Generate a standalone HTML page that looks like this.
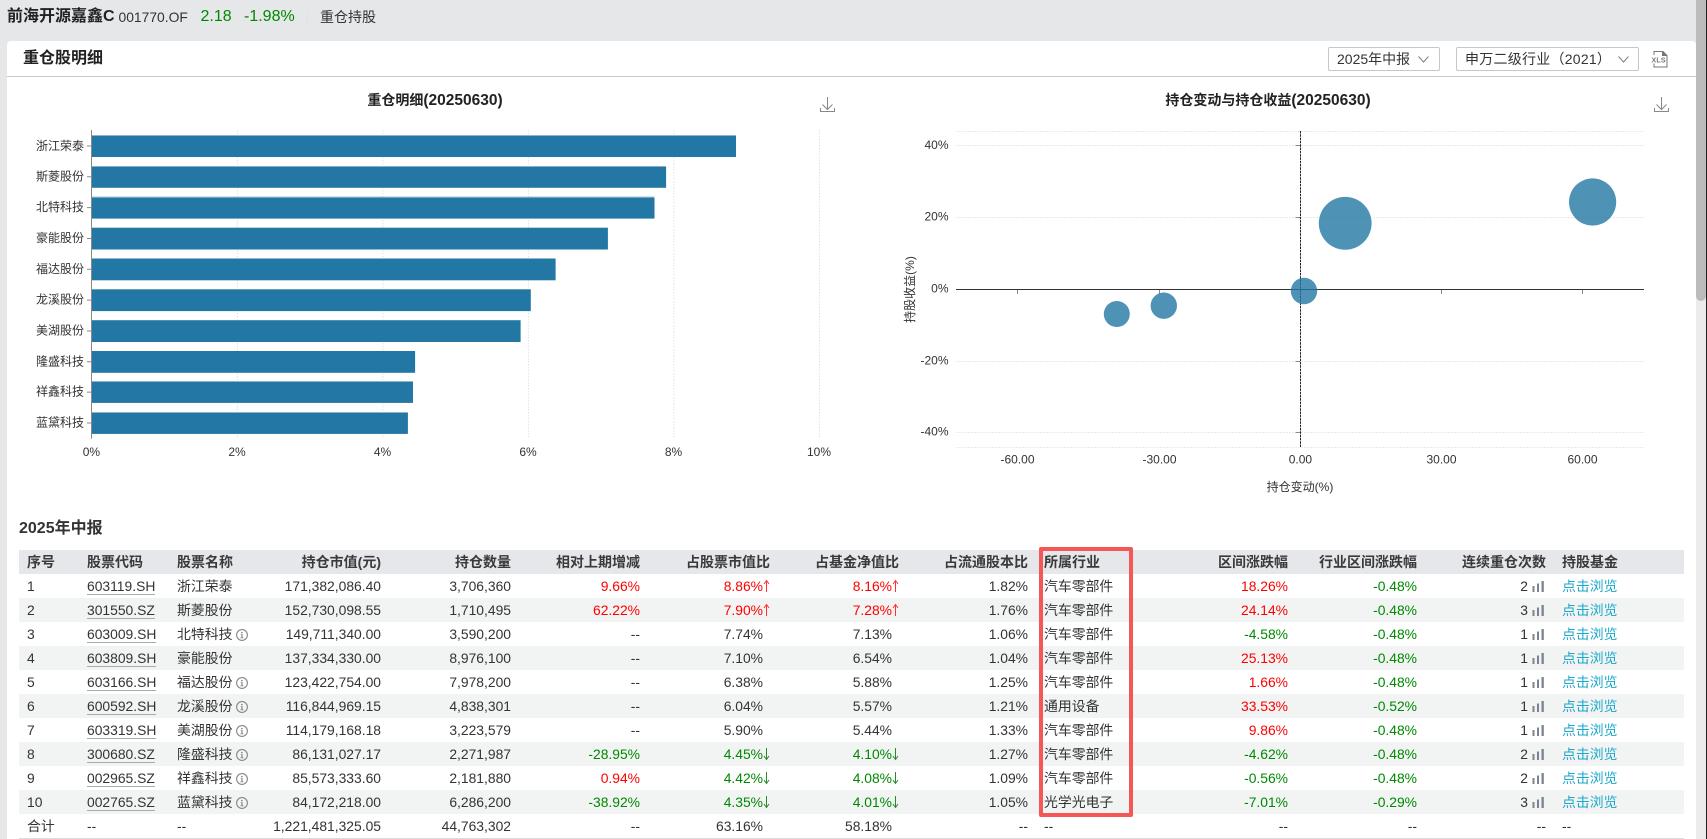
<!DOCTYPE html>
<html lang="zh-CN">
<head>
<meta charset="utf-8">
<title>重仓持股</title>
<style>
html,body{margin:0;padding:0;width:1707px;height:839px;overflow:hidden;background:#e5e7e9;font-family:"Liberation Sans","Noto Sans CJK SC",sans-serif;color:#333}
.abs{position:absolute;white-space:nowrap}
#card{position:absolute;left:7px;top:41px;width:1689px;height:798px;background:#fff;border-radius:4px 4px 0 0}
#hline{position:absolute;left:7px;top:75.5px;width:1689px;height:1px;background:#c8c8c8}
#track{position:absolute;left:1696px;top:0;width:11px;height:839px;background:#ececec}
#thumb{position:absolute;left:1696px;top:0;width:10px;height:301px;background:#bcbcbc;border-radius:0 0 5px 5px}
#sbline{position:absolute;left:1706px;top:0;width:1px;height:839px;background:#222}
.sel{position:absolute;top:47px;height:22px;border:1px solid #c4c7cc;border-radius:2px;background:#fff;font-size:14px;line-height:22px;color:#333;box-sizing:content-box}
.sel span{position:absolute;left:8px;top:0;white-space:nowrap}
.sel svg{position:absolute;top:7px}
svg.full{position:absolute;left:0;top:0}
svg.full text{font-family:"Liberation Sans","Noto Sans CJK SC",sans-serif}
table{position:absolute;left:19px;top:550px;width:1665px;border-collapse:collapse;table-layout:fixed;font-size:13.87px;line-height:24px}
th,td{height:24px;padding:0;white-space:nowrap;overflow:visible;font-weight:normal;text-align:right;padding-right:8px}
th{font-size:14px;font-weight:bold;background:#e5e7ea;color:#3a3a3a}
.l{text-align:left;padding-right:0;padding-left:8px}
tbody tr:nth-child(even) td{background:#f2f4f4}
tbody tr.tot td{background:#fff;border-bottom:1px solid #ddd;height:24px}
.r{color:#f00}.g{color:#080}
.pa{padding-right:15px}
.code{display:inline-block;line-height:24px;height:20px;border-bottom:1px solid #aaa;vertical-align:top}
.link{color:#1ba8c9}
.ar{display:inline-block;width:7px;height:14px;vertical-align:-2px}
.ic{display:inline-block;width:12px;height:12px;vertical-align:-2px;margin-left:4px}
.bars{display:inline-block;width:13px;height:11px;vertical-align:-1px;margin-left:4px;margin-right:1px}
#box{position:absolute;left:1039px;top:547px;width:94px;height:270px;box-sizing:border-box;border:4px solid #f55757;border-radius:2px}
</style>
</head>
<body>
<div id="card"></div>
<div id="hline"></div>
<div id="track"></div><div id="thumb"></div><div id="sbline"></div>

<div class="abs" style="left:7px;top:5px;font-size:16px;font-weight:bold;line-height:24px;color:#222">前海开源嘉鑫C</div>
<div class="abs" style="left:118.5px;top:5px;font-size:13.87px;line-height:24px;color:#333">001770.OF</div>
<div class="abs" style="left:200.5px;top:5px;font-size:16px;line-height:24px;color:#080">2.18</div>
<div class="abs" style="left:244px;top:5px;font-size:16px;line-height:24px;color:#080">-1.98%</div>
<div class="abs" style="left:307px;top:10px;width:1px;height:15px;background:#e0e2e4"></div>
<div class="abs" style="left:320px;top:5px;font-size:14px;line-height:24px;color:#333">重仓持股</div>
<div class="abs" style="left:23px;top:47px;font-size:16px;font-weight:bold;line-height:24px;color:#222">重仓股明细</div>

<div class="sel" style="left:1328px;width:110px"><span>2025年中报</span><svg style="left:88px" width="13" height="9" viewBox="0 0 13 9"><path d="M1.5 1.5L6.5 7L11.5 1.5" fill="none" stroke="#888" stroke-width="1.1"/></svg></div>
<div class="sel" style="left:1456px;width:181px"><span style="letter-spacing:.25px">申万二级行业（2021）</span><svg style="left:160px" width="13" height="9" viewBox="0 0 13 9"><path d="M1.5 1.5L6.5 7L11.5 1.5" fill="none" stroke="#888" stroke-width="1.1"/></svg></div>

<svg class="full" width="1707" height="839" viewBox="0 0 1707 839">
  <!-- XLS icon -->
  <path d="M1654 55V51.5H1663L1667 55.5V67H1654V63.5" fill="none" stroke="#777" stroke-width="1"/>
  <path d="M1662.5 51.5V55.5H1667" fill="#777" stroke="#777" stroke-width="1"/>
  <text x="1658.5" y="62.5" font-size="7" font-weight="bold" fill="#777" text-anchor="middle" textLength="14">XLS</text>

  <!-- download icons -->
  <g fill="none" stroke="#888" stroke-width="1">
    <path d="M827.5 97V109M822.5 104.5L827.5 109.5L832.5 104.5M820.5 108V111.5H834.5V108"/>
    <path d="M1661.5 97V109M1656.5 104.5L1661.5 109.5L1666.5 104.5M1654.5 108V111.5H1668.5V108"/>
  </g>

  <!-- chart titles -->
  <text x="435" y="105" font-size="14" font-weight="bold" text-anchor="middle" fill="#222">重仓明细<tspan font-size="15.5">(20250630)</tspan></text>
  <text x="1268" y="105" font-size="14" font-weight="bold" text-anchor="middle" fill="#222">持仓变动与持仓收益<tspan font-size="15.5">(20250630)</tspan></text>

  <!-- bar chart grid -->
  <g stroke="#e2e2e2" stroke-width="1" stroke-dasharray="1.5 1.5">
    <path d="M237.4 130V438.7M382.9 130V438.7M528.4 130V438.7M673.9 130V438.7M819.4 130V438.7"/>
  </g>
  <!-- bars -->
  <g fill="#2277a4" stroke="#8fb8cf" stroke-width="0">
    <rect x="91.4" y="135.2" width="644.6" height="21.8"/>
    <rect x="91.4" y="166" width="574.7" height="21.8"/>
    <rect x="91.4" y="196.8" width="563.1" height="21.8"/>
    <rect x="91.4" y="227.7" width="516.5" height="21.8"/>
    <rect x="91.4" y="258.5" width="464.2" height="21.8"/>
    <rect x="91.4" y="289.3" width="439.4" height="21.8"/>
    <rect x="91.4" y="320.2" width="429.2" height="21.8"/>
    <rect x="91.4" y="351" width="323.7" height="21.8"/>
    <rect x="91.4" y="381.3" width="321.6" height="21.6"/>
    <rect x="91.4" y="412.3" width="316.5" height="21.6"/>
  </g>
  <g fill="#8fb8cf" opacity=".9">
    <rect x="91.4" y="135" width="644.6" height="1"/>
    <rect x="91.4" y="166" width="574.7" height="1"/>
    <rect x="91.4" y="196.8" width="563.1" height="1"/>
    <rect x="91.4" y="381" width="321.6" height="1"/>
    <rect x="91.4" y="412" width="316.5" height="1"/>
  </g>
  <path d="M91.5 130V438.7" stroke="#888" stroke-width="1" fill="none"/>
  <path d="M87 146H91M87 176.8H91M87 207.6H91M87 238.5H91M87 269.3H91M87 300.1H91M87 331H91M87 361.8H91M87 392.1H91M87 423H91" stroke="#888" stroke-width="1" fill="none"/>
  <g font-size="12" fill="#333" text-anchor="end">
    <text x="84" y="150">浙江荣泰</text>
    <text x="84" y="180.3">斯菱股份</text>
    <text x="84" y="211.1">北特科技</text>
    <text x="84" y="242">豪能股份</text>
    <text x="84" y="272.8">福达股份</text>
    <text x="84" y="303.6">龙溪股份</text>
    <text x="84" y="334.5">美湖股份</text>
    <text x="84" y="365.3">隆盛科技</text>
    <text x="84" y="395.6">祥鑫科技</text>
    <text x="84" y="426.5">蓝黛科技</text>
  </g>
  <g font-size="12" fill="#333" text-anchor="middle">
    <text x="91.4" y="456">0%</text>
    <text x="237" y="456">2%</text>
    <text x="382.5" y="456">4%</text>
    <text x="528" y="456">6%</text>
    <text x="673.5" y="456">8%</text>
    <text x="819" y="456">10%</text>
  </g>

  <!-- bubble chart -->
  <g stroke="#e8eaee" stroke-width="1" stroke-dasharray="2 1" fill="none">
    <path d="M956 131.5H1644M956 145.5H1644M956 217.5H1644M956 361.5H1644M956 432.5H1644M956 447.5H1644"/>
  </g>
  <path d="M1295.5 145.5H1300M1295.5 217.5H1300M1295.5 361.5H1300M1295.5 432.5H1300" stroke="#888" fill="none"/>
  <path d="M1017.5 289.5V294M1159.5 289.5V294M1441.5 289.5V294M1582.5 289.5V294" stroke="#888" fill="none"/>
  <path d="M1300.5 131V447" stroke="#222" stroke-width="1" stroke-dasharray="2.5 .8" fill="none"/>
  <path d="M956 289.5H1644" stroke="#333" stroke-width="1" fill="none"/>
  <g fill="#2277a4" fill-opacity=".8">
    <circle cx="1592.6" cy="202" r="23.6"/>
    <circle cx="1345.2" cy="223.3" r="26.4"/>
    <circle cx="1304" cy="291" r="13.2"/>
    <circle cx="1163.8" cy="305.7" r="13.2"/>
    <circle cx="1116.8" cy="314" r="13"/>
  </g>
  <g font-size="12" fill="#333" text-anchor="end">
    <text x="948.5" y="149">40%</text>
    <text x="948.5" y="220.5">20%</text>
    <text x="948.5" y="292.5">0%</text>
    <text x="948.5" y="364.5">-20%</text>
    <text x="948.5" y="435.5">-40%</text>
  </g>
  <g font-size="12" fill="#333" text-anchor="middle">
    <text x="1017.5" y="463.5">-60.00</text>
    <text x="1159.5" y="463.5">-30.00</text>
    <text x="1300.4" y="463.5">0.00</text>
    <text x="1441.5" y="463.5">30.00</text>
    <text x="1582.5" y="463.5">60.00</text>
    <text x="1300" y="491">持仓变动(%)</text>
    <text x="0" y="0" transform="translate(914,289.5) rotate(-90)">持股收益(%)</text>
  </g>
</svg>

<div class="abs" style="left:19px;top:517px;font-size:16px;font-weight:bold;line-height:24px;color:#333">2025年中报</div>

<table>
<colgroup>
<col style="width:60px"><col style="width:90px"><col style="width:92px"><col style="width:128px"><col style="width:130px"><col style="width:129px"><col style="width:130px"><col style="width:129px"><col style="width:129px"><col style="width:119px"><col style="width:141px"><col style="width:129px"><col style="width:129px"><col style="width:130px">
</colgroup>
<thead>
<tr><th class="l">序号</th><th class="l">股票代码</th><th class="l">股票名称</th><th>持仓市值(元)</th><th>持仓数量</th><th>相对上期增减</th><th>占股票市值比</th><th>占基金净值比</th><th>占流通股本比</th><th class="l">所属行业</th><th>区间涨跌幅</th><th>行业区间涨跌幅</th><th>连续重仓次数</th><th class="l">持股基金</th></tr>
</thead>
<tbody>
<tr><td class="l">1</td><td class="l"><span class="code">603119.SH</span></td><td class="l">浙江荣泰</td><td>171,382,086.40</td><td>3,706,360</td><td class="r">9.66%</td><td class="r">8.86%<svg class="ar" viewBox="0 0 7 14"><path d="M3.5 13V2M1 5L3.5 1.5L6 5" fill="none" stroke="#f33" stroke-width="1"/></svg></td><td class="r">8.16%<svg class="ar" viewBox="0 0 7 14"><path d="M3.5 13V2M1 5L3.5 1.5L6 5" fill="none" stroke="#f33" stroke-width="1"/></svg></td><td>1.82%</td><td class="l">汽车零部件</td><td class="r">18.26%</td><td class="g">-0.48%</td><td>2<svg class="bars" viewBox="0 0 13 11"><path d="M0.5 5h2v6h-2zM5 2.5h2v8.500h-2zM9.500 0h2.300v11h-2.300z" fill="#7b8390"/></svg></td><td class="l link">点击浏览</td></tr>
<tr><td class="l">2</td><td class="l"><span class="code">301550.SZ</span></td><td class="l">斯菱股份</td><td>152,730,098.55</td><td>1,710,495</td><td class="r">62.22%</td><td class="r">7.90%<svg class="ar" viewBox="0 0 7 14"><path d="M3.5 13V2M1 5L3.5 1.5L6 5" fill="none" stroke="#f33" stroke-width="1"/></svg></td><td class="r">7.28%<svg class="ar" viewBox="0 0 7 14"><path d="M3.5 13V2M1 5L3.5 1.5L6 5" fill="none" stroke="#f33" stroke-width="1"/></svg></td><td>1.76%</td><td class="l">汽车零部件</td><td class="r">24.14%</td><td class="g">-0.48%</td><td>3<svg class="bars" viewBox="0 0 13 11"><path d="M0.5 5h2v6h-2zM5 2.5h2v8.500h-2zM9.500 0h2.300v11h-2.300z" fill="#7b8390"/></svg></td><td class="l link">点击浏览</td></tr>
<tr><td class="l">3</td><td class="l"><span class="code">603009.SH</span></td><td class="l">北特科技<svg class="ic" viewBox="0 0 12 12"><circle cx="6" cy="6" r="5.400" fill="none" stroke="#888" stroke-width="1.1"/><path d="M5 3h1.600v1.300H5zM4.700 5.200h1.900v3.200h.8v.8H4.500v-.8h.9V6H4.700z" fill="#888"/></svg></td><td>149,711,340.00</td><td>3,590,200</td><td>--</td><td class="pa">7.74%</td><td class="pa">7.13%</td><td>1.06%</td><td class="l">汽车零部件</td><td class="g">-4.58%</td><td class="g">-0.48%</td><td>1<svg class="bars" viewBox="0 0 13 11"><path d="M0.5 5h2v6h-2zM5 2.5h2v8.500h-2zM9.500 0h2.300v11h-2.300z" fill="#7b8390"/></svg></td><td class="l link">点击浏览</td></tr>
<tr><td class="l">4</td><td class="l"><span class="code">603809.SH</span></td><td class="l">豪能股份</td><td>137,334,330.00</td><td>8,976,100</td><td>--</td><td class="pa">7.10%</td><td class="pa">6.54%</td><td>1.04%</td><td class="l">汽车零部件</td><td class="r">25.13%</td><td class="g">-0.48%</td><td>1<svg class="bars" viewBox="0 0 13 11"><path d="M0.5 5h2v6h-2zM5 2.5h2v8.500h-2zM9.500 0h2.300v11h-2.300z" fill="#7b8390"/></svg></td><td class="l link">点击浏览</td></tr>
<tr><td class="l">5</td><td class="l"><span class="code">603166.SH</span></td><td class="l">福达股份<svg class="ic" viewBox="0 0 12 12"><circle cx="6" cy="6" r="5.400" fill="none" stroke="#888" stroke-width="1.1"/><path d="M5 3h1.600v1.300H5zM4.700 5.200h1.900v3.200h.8v.8H4.500v-.8h.9V6H4.700z" fill="#888"/></svg></td><td>123,422,754.00</td><td>7,978,200</td><td>--</td><td class="pa">6.38%</td><td class="pa">5.88%</td><td>1.25%</td><td class="l">汽车零部件</td><td class="r">1.66%</td><td class="g">-0.48%</td><td>1<svg class="bars" viewBox="0 0 13 11"><path d="M0.5 5h2v6h-2zM5 2.5h2v8.500h-2zM9.500 0h2.300v11h-2.300z" fill="#7b8390"/></svg></td><td class="l link">点击浏览</td></tr>
<tr><td class="l">6</td><td class="l"><span class="code">600592.SH</span></td><td class="l">龙溪股份<svg class="ic" viewBox="0 0 12 12"><circle cx="6" cy="6" r="5.400" fill="none" stroke="#888" stroke-width="1.1"/><path d="M5 3h1.600v1.300H5zM4.700 5.200h1.900v3.200h.8v.8H4.500v-.8h.9V6H4.700z" fill="#888"/></svg></td><td>116,844,969.15</td><td>4,838,301</td><td>--</td><td class="pa">6.04%</td><td class="pa">5.57%</td><td>1.21%</td><td class="l">通用设备</td><td class="r">33.53%</td><td class="g">-0.52%</td><td>1<svg class="bars" viewBox="0 0 13 11"><path d="M0.5 5h2v6h-2zM5 2.5h2v8.500h-2zM9.500 0h2.300v11h-2.300z" fill="#7b8390"/></svg></td><td class="l link">点击浏览</td></tr>
<tr><td class="l">7</td><td class="l"><span class="code">603319.SH</span></td><td class="l">美湖股份<svg class="ic" viewBox="0 0 12 12"><circle cx="6" cy="6" r="5.400" fill="none" stroke="#888" stroke-width="1.1"/><path d="M5 3h1.600v1.300H5zM4.700 5.200h1.900v3.200h.8v.8H4.500v-.8h.9V6H4.700z" fill="#888"/></svg></td><td>114,179,168.18</td><td>3,223,579</td><td>--</td><td class="pa">5.90%</td><td class="pa">5.44%</td><td>1.33%</td><td class="l">汽车零部件</td><td class="r">9.86%</td><td class="g">-0.48%</td><td>1<svg class="bars" viewBox="0 0 13 11"><path d="M0.5 5h2v6h-2zM5 2.5h2v8.500h-2zM9.500 0h2.300v11h-2.300z" fill="#7b8390"/></svg></td><td class="l link">点击浏览</td></tr>
<tr><td class="l">8</td><td class="l"><span class="code">300680.SZ</span></td><td class="l">隆盛科技<svg class="ic" viewBox="0 0 12 12"><circle cx="6" cy="6" r="5.400" fill="none" stroke="#888" stroke-width="1.1"/><path d="M5 3h1.600v1.300H5zM4.700 5.200h1.900v3.200h.8v.8H4.500v-.8h.9V6H4.700z" fill="#888"/></svg></td><td>86,131,027.17</td><td>2,271,987</td><td class="g">-28.95%</td><td class="g">4.45%<svg class="ar" viewBox="0 0 7 14"><path d="M3.500 1V12M1 9L3.500 12.500L6 9" fill="none" stroke="#2a8a2a" stroke-width="1"/></svg></td><td class="g">4.10%<svg class="ar" viewBox="0 0 7 14"><path d="M3.500 1V12M1 9L3.500 12.500L6 9" fill="none" stroke="#2a8a2a" stroke-width="1"/></svg></td><td>1.27%</td><td class="l">汽车零部件</td><td class="g">-4.62%</td><td class="g">-0.48%</td><td>2<svg class="bars" viewBox="0 0 13 11"><path d="M0.5 5h2v6h-2zM5 2.5h2v8.500h-2zM9.500 0h2.300v11h-2.300z" fill="#7b8390"/></svg></td><td class="l link">点击浏览</td></tr>
<tr><td class="l">9</td><td class="l"><span class="code">002965.SZ</span></td><td class="l">祥鑫科技<svg class="ic" viewBox="0 0 12 12"><circle cx="6" cy="6" r="5.400" fill="none" stroke="#888" stroke-width="1.1"/><path d="M5 3h1.600v1.300H5zM4.700 5.200h1.900v3.200h.8v.8H4.500v-.8h.9V6H4.700z" fill="#888"/></svg></td><td>85,573,333.60</td><td>2,181,880</td><td class="r">0.94%</td><td class="g">4.42%<svg class="ar" viewBox="0 0 7 14"><path d="M3.500 1V12M1 9L3.500 12.500L6 9" fill="none" stroke="#2a8a2a" stroke-width="1"/></svg></td><td class="g">4.08%<svg class="ar" viewBox="0 0 7 14"><path d="M3.500 1V12M1 9L3.500 12.500L6 9" fill="none" stroke="#2a8a2a" stroke-width="1"/></svg></td><td>1.09%</td><td class="l">汽车零部件</td><td class="g">-0.56%</td><td class="g">-0.48%</td><td>2<svg class="bars" viewBox="0 0 13 11"><path d="M0.5 5h2v6h-2zM5 2.5h2v8.500h-2zM9.500 0h2.300v11h-2.300z" fill="#7b8390"/></svg></td><td class="l link">点击浏览</td></tr>
<tr><td class="l">10</td><td class="l"><span class="code">002765.SZ</span></td><td class="l">蓝黛科技<svg class="ic" viewBox="0 0 12 12"><circle cx="6" cy="6" r="5.400" fill="none" stroke="#888" stroke-width="1.1"/><path d="M5 3h1.600v1.300H5zM4.700 5.200h1.900v3.200h.8v.8H4.500v-.8h.9V6H4.700z" fill="#888"/></svg></td><td>84,172,218.00</td><td>6,286,200</td><td class="g">-38.92%</td><td class="g">4.35%<svg class="ar" viewBox="0 0 7 14"><path d="M3.500 1V12M1 9L3.500 12.500L6 9" fill="none" stroke="#2a8a2a" stroke-width="1"/></svg></td><td class="g">4.01%<svg class="ar" viewBox="0 0 7 14"><path d="M3.500 1V12M1 9L3.500 12.500L6 9" fill="none" stroke="#2a8a2a" stroke-width="1"/></svg></td><td>1.05%</td><td class="l">光学光电子</td><td class="g">-7.01%</td><td class="g">-0.29%</td><td>3<svg class="bars" viewBox="0 0 13 11"><path d="M0.5 5h2v6h-2zM5 2.5h2v8.500h-2zM9.500 0h2.300v11h-2.300z" fill="#7b8390"/></svg></td><td class="l link">点击浏览</td></tr>
<tr class="tot"><td class="l">合计</td><td class="l">--</td><td class="l">--</td><td>1,221,481,325.05</td><td>44,763,302</td><td>--</td><td class="pa">63.16%</td><td class="pa">58.18%</td><td>--</td><td class="l">--</td><td>--</td><td>--</td><td>--</td><td class="l">--</td></tr>
</tbody>
</table>
<div id="box"></div>
</body>
</html>
